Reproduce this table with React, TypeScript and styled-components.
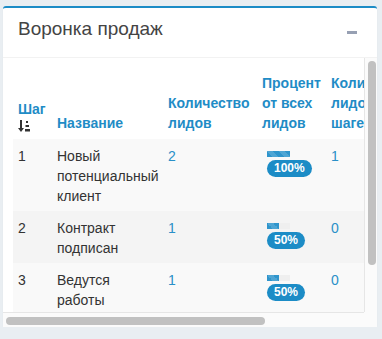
import React, { useLayoutEffect, useRef, useState } from "react";
import styled, { createGlobalStyle } from "styled-components";

const GlobalStyle = createGlobalStyle`
  html, body {
    margin: 0;
    padding: 0;
    background: #e9eef2;
    font-family: "Liberation Sans", Arial, sans-serif;
  }
`;

const Panel = styled.section`
  margin: 6px 5px 0 3px;
  background: #fff;
  border-top: 2px solid #1c8cc6;
  border-radius: 3px;
  box-shadow: 0 1px 1px rgba(0, 0, 0, 0.1);
`;

const Header = styled.header`
  display: flex;
  align-items: flex-start;
  justify-content: space-between;
  height: 50px;
  box-sizing: border-box;
  padding: 11px 20px 0 15px;
  border-bottom: 1px solid #f2f2f2;
`;

const Title = styled.h3`
  margin: 0;
  font-size: 19px;
  font-weight: normal;
  line-height: 20px;
  color: #444;
`;

const Collapse = styled.button`
  border: 0;
  padding: 0;
  margin-top: 12px;
  background: transparent;
  width: 10px;
  height: 10px;
  display: flex;
  align-items: flex-start;
  cursor: pointer;

  &::before {
    content: "";
    display: block;
    width: 10px;
    height: 3px;
    background: #97a0b3;
  }
`;

/* Scroll frame: viewport plus its own drawn scrollbars */
const Frame = styled.div`
  display: grid;
  grid-template-columns: minmax(0, 1fr) 13px;
  grid-template-rows: 254px 15px;
`;

const Viewport = styled.div`
  overflow: auto;
  scrollbar-width: none;

  &::-webkit-scrollbar {
    display: none;
  }
`;

const VTrack = styled.div`
  background: #fbfbfb;
  box-shadow: inset 1px 0 0 #e6e6e6;
  padding: 3px 1px 3px 4px;
  box-sizing: border-box;
  overflow: hidden;
`;

const HTrack = styled.div`
  background: #fbfbfb;
  box-shadow: inset 0 1px 0 #e6e6e6;
  padding: 5px 3px 2px;
  box-sizing: border-box;
  overflow: hidden;
`;

const Corner = styled.div`
  background: #fbfbfb;
`;

const Thumb = styled.div<{ $axis: "x" | "y" }>`
  background: #c1c1c1;
  border-radius: 4px;
  ${(p) => (p.$axis === "y" ? "width: 8px;" : "height: 8px;")}
`;

const Body = styled.div`
  padding: 10px 10px 52px;
  width: max-content;
`;

const Table = styled.table`
  width: 475px;
  table-layout: fixed;
  border-collapse: collapse;
  font-size: 14px;
  line-height: 20px;
  color: #333;
`;

const HeadCell = styled.th`
  padding: 5px 5px 6px;
  text-align: left;
  vertical-align: bottom;
  font-weight: bold;
  color: #1f8cc6;
`;

const Row = styled.tr<{ $even: boolean }>`
  background: ${(p) => (p.$even ? "#f4f4f4" : "#f9f9f9")};
`;

const Cell = styled.td`
  padding: 7px 5px 5px;
  vertical-align: top;
`;

const Count = styled.span`
  color: #2a90c8;
`;

const Meter = styled.div`
  padding: 5px 0 0 5px;
  display: flex;
  flex-direction: column;
  align-items: flex-start;
  gap: 3px;
`;

const Track = styled.div`
  width: 23px;
  height: 6px;
  background: #efefef;
`;

const Fill = styled.div`
  height: 100%;
  background-color: #2f95cc;
  background-image: linear-gradient(
    45deg,
    rgba(255, 255, 255, 0.15) 25%,
    transparent 25%,
    transparent 50%,
    rgba(255, 255, 255, 0.15) 50%,
    rgba(255, 255, 255, 0.15) 75%,
    transparent 75%,
    transparent
  );
  background-size: 12px 12px;
`;

const Badge = styled.span`
  display: inline-block;
  height: 17px;
  padding: 0 7px;
  border-radius: 9px;
  background: #1c8cc6;
  color: #fff;
  font-size: 12px;
  font-weight: bold;
  line-height: 17px;
`;

const SortIcon = styled.svg`
  display: block;
  margin-top: 1px;
`;

type Step = {
  n: number;
  name: string;
  leads: number;
  onStep: number;
};

const steps: Step[] = [
  { n: 1, name: "Новый потенциальный клиент", leads: 2, onStep: 1 },
  { n: 2, name: "Контракт подписан", leads: 1, onStep: 0 },
  { n: 3, name: "Ведутся работы", leads: 1, onStep: 0 },
];

const total = steps[0].leads;

function Progress({ pct }: { pct: number }) {
  return (
    <Meter>
      <Track>
        <Fill style={{ width: `${pct}%` }} />
      </Track>
      <Badge>{pct}%</Badge>
    </Meter>
  );
}

type Metrics = { vLen: number; vPos: number; hLen: number; hPos: number };

// Thumb sizes and offsets follow the viewport's scroll geometry
function useScrollMetrics(ref: React.RefObject<HTMLDivElement | null>): Metrics {
  const [m, setM] = useState<Metrics>({ vLen: 0, vPos: 0, hLen: 0, hPos: 0 });
  useLayoutEffect(() => {
    const el = ref.current;
    if (!el) return;
    const update = () => {
      const vInner = el.clientHeight - 6;
      const hInner = el.clientWidth - 6;
      const vLen = (vInner * el.clientHeight) / el.scrollHeight;
      const hLen = (hInner * el.clientWidth) / el.scrollWidth;
      const vMax = Math.max(1, el.scrollHeight - el.clientHeight);
      const hMax = Math.max(1, el.scrollWidth - el.clientWidth);
      setM({
        vLen,
        hLen,
        vPos: ((vInner - vLen) * el.scrollTop) / vMax,
        hPos: ((hInner - hLen) * el.scrollLeft) / hMax,
      });
    };
    update();
    el.addEventListener("scroll", update);
    return () => el.removeEventListener("scroll", update);
  }, [ref]);
  return m;
}

export default function App() {
  const viewport = useRef<HTMLDivElement>(null);
  const m = useScrollMetrics(viewport);

  return (
    <>
      <GlobalStyle />
      <Panel>
        <Header>
          <Title>Воронка продаж</Title>
          <Collapse aria-label="Свернуть" />
        </Header>
        <Frame>
          <Viewport ref={viewport}>
            <Body>
              <Table>
                <colgroup>
                  <col style={{ width: 39 }} />
                  <col style={{ width: 111 }} />
                  <col style={{ width: 94 }} />
                  <col style={{ width: 69 }} />
                  <col style={{ width: 94 }} />
                  <col style={{ width: 68 }} />
                </colgroup>
                <thead>
                  <tr>
                    <HeadCell>
                      Шаг
                      <SortIcon width="13" height="13" viewBox="0 0 13 13">
                        <rect x="2" y="0" width="2" height="9" fill="#333" />
                        <polygon points="0,8 6,8 3,12" fill="#333" />
                        <rect x="8" y="1" width="2" height="2" fill="#333" />
                        <rect x="7.5" y="5" width="3.5" height="2" fill="#333" />
                        <rect x="7" y="9" width="5" height="2.5" fill="#333" />
                      </SortIcon>
                    </HeadCell>
                    <HeadCell>Название</HeadCell>
                    <HeadCell>Количество лидов</HeadCell>
                    <HeadCell>Процент от всех лидов</HeadCell>
                    <HeadCell>Количество лидов на шаге</HeadCell>
                    <HeadCell>% на шаге</HeadCell>
                  </tr>
                </thead>
                <tbody>
                  {steps.map((s, i) => (
                    <Row key={s.n} $even={i % 2 === 1}>
                      <Cell>{s.n}</Cell>
                      <Cell>{s.name}</Cell>
                      <Cell>
                        <Count>{s.leads}</Count>
                      </Cell>
                      <Cell>
                        <Progress pct={Math.round((s.leads / total) * 100)} />
                      </Cell>
                      <Cell>
                        <Count>{s.onStep}</Count>
                      </Cell>
                      <Cell>
                        <Progress pct={Math.round((s.onStep / total) * 100)} />
                      </Cell>
                    </Row>
                  ))}
                </tbody>
              </Table>
            </Body>
          </Viewport>
          <VTrack>
            <Thumb $axis="y" style={{ height: m.vLen, marginTop: m.vPos }} />
          </VTrack>
          <HTrack>
            <Thumb $axis="x" style={{ width: m.hLen, marginLeft: m.hPos }} />
          </HTrack>
          <Corner />
        </Frame>
      </Panel>
    </>
  );
}
